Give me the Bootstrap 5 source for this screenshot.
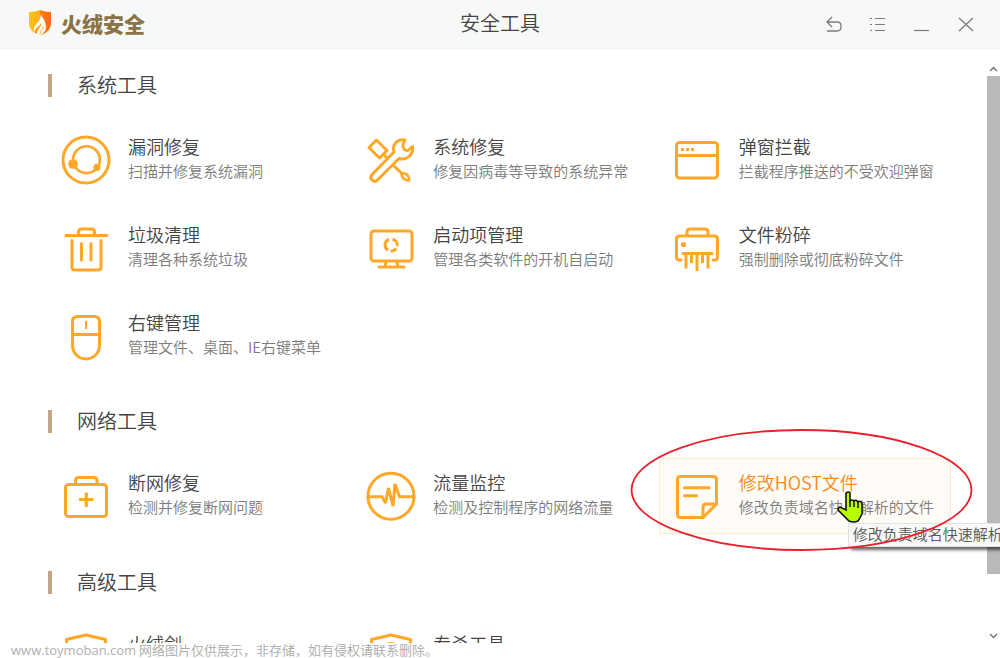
<!DOCTYPE html>
<html lang="zh-CN">
<head>
<meta charset="utf-8">
<meta name="viewport" content="width=device-width, initial-scale=1">
<title>安全工具</title>
<link href="https://cdn.jsdelivr.net/npm/bootstrap@5.3.0/dist/css/bootstrap.min.css" rel="stylesheet">
<style>
  body { font-family: "Noto Sans CJK SC", sans-serif; font-weight: 350; color: #444; background: #fff; }
  .titlebar { display: grid; grid-template-columns: 1fr auto 1fr; height: 49px; padding: 0 12px 2px; background: #f7f9f8; border-bottom: 1px solid #eff1f0; }
  .brand-name { font-size: 21px; line-height: 24px; font-weight: 900; color: #8a7345; }
  .page-title, .group-title { font-size: 20px; line-height: 24px; font-weight: 350; }
  .win-btn { width: 44px; height: 46px; color: #7b7b7b; border-radius: 0; }
  .tool-pane { padding: 25px 36px 0 48px; }
  .group-title { height: 23px; margin-bottom: 25px; padding-left: 25px; border-left: 4px solid #c3a587; line-height: 21px; }
  .tool-group { margin-bottom: 36px; }
  .tool-group + .tool-group { margin-bottom: 37px; }
  .tool-grid { --bs-gutter-x: 13px; --bs-gutter-y: 12px; }
  .tool { height: 76px; padding: 0 11px; gap: 16px; border: 1px solid transparent; color: #444; white-space: nowrap; }
  .tool.active { background: #fffbf6; border-color: #ffe9c8; }
  .tool.active .tool-name { color: #f78a23; }
  .tool-icon { width: 52px; height: 52px; flex: none; fill: none; stroke: #ffa726; stroke-width: 3; stroke-linecap: round; stroke-linejoin: round; }
  .tool-icon .dot { fill: #ffa726; stroke: none; }
  .tool-text { padding-bottom: 4px; }
  .tool-name { font-size: 18px; line-height: 26px; }
  .tool-desc { font-size: 15px; line-height: 24px; color: #7c7c7c; }
  .ring { left: -29px; top: -29px; z-index: 5; pointer-events: none; }
  .pointer { left: 178px; top: 32px; z-index: 4; }
  .hint { left: 189px; top: 65px; z-index: 3; height: 24px; padding: 0 4px; font-size: 15px; line-height: 20px; color: #575757; background: #f9f9f9; border: 1px solid #e2e2e2; box-shadow: 3px 3px 3px rgba(0,0,0,.6); white-space: nowrap; }
  .scroller { width: 13px; padding-top: 13px; }
  .scroller button { height: 14px; color: #777; }
  .thumb { flex: 9 0 0; background: #b9b9b9; }
  .track { flex: 1 0 0; }
  .notice { height: 15px; padding-left: 11px; font-size: 13px; line-height: 13px; color: #a9a9a9; }
  .notice a { font-family: "Open Sans", sans-serif; font-weight: 400; color: #b0b0b0; }
</style>
</head>
<body class="vh-100 d-flex flex-column overflow-hidden">
<header class="titlebar align-items-center">
  <div class="d-flex align-items-center gap-2 ps-3">
    <svg width="25" height="28" viewBox="0 0 25 28" aria-hidden="true">
      <defs><linearGradient id="flame" x1="0" x2="1"><stop offset="0" stop-color="#ffc21e"/><stop offset=".5" stop-color="#ffae19"/><stop offset=".5" stop-color="#ff8416"/><stop offset="1" stop-color="#fb6810"/></linearGradient></defs>
      <path d="M1 3Q7 3 12 1Q17 3 23 3V14C23 21 18 24 12 27C6 24 1 21 1 14Z" fill="url(#flame)"/>
      <path d="M13 5C14 9 18 12 18 18C18 22 15 25 12 27C11 27 7 25 6 23C5 18 8 16 10 13C12 10 13 8 13 5Z" fill="#fff"/>
      <path d="M13 14C14 18 9 19 9 25L7 24C5 19 12 18 13 14Z" fill="#ff9a18"/>
      <path d="M15 17C16 20 12 21 12 26" fill="none" stroke="#ffb04a" stroke-width="1"/>
    </svg>
    <span class="brand-name">火绒安全</span>
  </div>
  <h1 class="page-title m-0">安全工具</h1>
  <div class="d-flex justify-content-end">
    <button class="win-btn btn p-0 border-0" type="button" aria-label="返回"><svg width="20" height="20" viewBox="0 0 20 20" fill="none" stroke="currentColor" stroke-width="1.3"><path d="M8 2L3 7L8 12M3 7H13Q17 7 17 11V12Q17 16 13 16H3"/></svg></button>
    <button class="win-btn btn p-0 border-0" type="button" aria-label="菜单"><svg width="20" height="20" viewBox="0 0 20 20" fill="none" stroke="currentColor" stroke-width="1.2"><path d="M2 3.5H4M7 3.5H17M2 9.5H4M7 9.5H17M2 15.5H4M7 15.5H17"/></svg></button>
    <button class="win-btn btn p-0 border-0" type="button" aria-label="最小化"><svg width="20" height="20" viewBox="0 0 20 20" fill="none" stroke="currentColor" stroke-width="1.2"><path d="M2 15.5H17"/></svg></button>
    <button class="win-btn btn p-0 border-0" type="button" aria-label="关闭"><svg width="20" height="20" viewBox="0 0 20 20" fill="none" stroke="currentColor" stroke-width="1.3"><path d="M3 3L17 16M17 3L3 16"/></svg></button>
  </div>
</header>

<main class="d-flex flex-grow-1 overflow-hidden">
  <div class="tool-pane flex-grow-1">
    <section class="tool-group">
      <h2 class="group-title">系统工具</h2>
      <div class="row tool-grid">
        <div class="col-4"><a class="tool d-flex align-items-center text-decoration-none" href="#">
          <svg class="tool-icon" viewBox="0 0 52 52"><circle cx="26" cy="26" r="23"/><circle cx="26.5" cy="25.7" r="13.4" stroke-width="2.6"/><circle class="dot" cx="13" cy="30" r="4.8"/><circle class="dot" cx="37" cy="33.3" r="3.6"/></svg>
          <span class="tool-text"><span class="tool-name d-block">漏洞修复</span><span class="tool-desc d-block">扫描并修复系统漏洞</span></span></a></div>
        <div class="col-4"><a class="tool d-flex align-items-center text-decoration-none" href="#">
          <svg class="tool-icon" viewBox="0 0 52 52"><path d="M4 13.5L11.5 6L22 16.5L14.5 24ZM18.5 20.5L21.5 23.5M29 32L37 39.5"/><path d="M36.5 39.5Q41 38.500 43 42Q44.500 45 44 46.500Q41 46.500 38.500 44.500Q36.500 42.500 36.500 39.500Z" stroke-width="2.6"/><path d="M40 6C33 4.500 26.500 10 29 18L7 40.500C3.500 44.500 8.500 49.500 12.500 46L34 24.500C42 27 49 20 47.500 12.500L43 16.500Q38 17 38 11.500Q38 9.500 40 6Z"/></svg>
          <span class="tool-text"><span class="tool-name d-block">系统修复</span><span class="tool-desc d-block">修复因病毒等导致的系统异常</span></span></a></div>
        <div class="col-4"><a class="tool d-flex align-items-center text-decoration-none" href="#">
          <svg class="tool-icon" viewBox="0 0 52 52"><rect x="5.500" y="8.500" width="41" height="35.500" rx="3"/><path d="M6 21.500H46"/><path class="dot" d="M10 14h3v3h-3zM15 14h3v3h-3zM20 14h3v3h-3z"/></svg>
          <span class="tool-text"><span class="tool-name d-block">弹窗拦截</span><span class="tool-desc d-block">拦截程序推送的不受欢迎弹窗</span></span></a></div>
        <div class="col-4"><a class="tool d-flex align-items-center text-decoration-none" href="#">
          <svg class="tool-icon" viewBox="0 0 52 52"><path d="M6 13.500H47M18.500 13V10Q18.500 7 21.500 7H31.500Q34.500 7 34.500 10V13M12 18.500V45Q12 48 15 48H38Q41 48 41 45V18.500M21.500 21.500V38M31 21.500V38"/></svg>
          <span class="tool-text"><span class="tool-name d-block">垃圾清理</span><span class="tool-desc d-block">清理各种系统垃圾</span></span></a></div>
        <div class="col-4"><a class="tool d-flex align-items-center text-decoration-none" href="#">
          <svg class="tool-icon" viewBox="0 0 52 52"><rect x="6" y="9" width="41" height="30" rx="3"/><path d="M14 45H39M21 40L20 45M32 40L33 45"/><path d="M23 28.200A6 6 0 0 1 23.500 17.600M27.500 17.200A6 6 0 0 1 32.200 24M30.500 27A6 6 0 0 1 25.500 29M21 19L24 17.300M31.500 27L28.500 28.700" stroke-linecap="butt"/></svg>
          <span class="tool-text"><span class="tool-name d-block">启动项管理</span><span class="tool-desc d-block">管理各类软件的开机自启动</span></span></a></div>
        <div class="col-4"><a class="tool d-flex align-items-center text-decoration-none" href="#">
          <svg class="tool-icon" viewBox="0 0 52 52"><path d="M16 13.500V10Q16 7 19 7H34Q37 7 37 10V13.500M10 38H8.500Q5.500 38 5.500 35V17Q5.500 14 8.500 14H43.500Q46.500 14 46.500 17V35Q46.500 38 43.500 38H42M12 31.500H41"/><path d="M15 32V46.500M20.500 32V41M26 32V49M31.500 32V41M37 32V46.500" stroke-linecap="butt"/><circle class="dot" cx="12.500" cy="22.500" r="2.600"/></svg>
          <span class="tool-text"><span class="tool-name d-block">文件粉碎</span><span class="tool-desc d-block">强制删除或彻底粉碎文件</span></span></a></div>
        <div class="col-4"><a class="tool d-flex align-items-center text-decoration-none" href="#">
          <svg class="tool-icon" viewBox="0 0 52 52"><path d="M17.500 6.500H34.500Q39.500 6.500 39.500 11.500V35.500A13.500 13.500 0 0 1 12.500 35.500V11.500Q12.500 6.500 17.500 6.500ZM13 24.500H39"/><path d="M26 11V19" stroke-width="2" stroke-linecap="butt"/></svg>
          <span class="tool-text"><span class="tool-name d-block">右键管理</span><span class="tool-desc d-block">管理文件、桌面、IE右键菜单</span></span></a></div>
      </div>
    </section>

    <section class="tool-group">
      <h2 class="group-title">网络工具</h2>
      <div class="row tool-grid">
        <div class="col-4"><a class="tool d-flex align-items-center text-decoration-none" href="#">
          <svg class="tool-icon" viewBox="0 0 52 52"><rect x="5.500" y="14.500" width="41" height="32" rx="3"/><path d="M15.500 14V10.500Q15.500 7.500 18.500 7.500H34Q37 7.500 37 10.500V14"/><path d="M19 29.500H33.500M26.300 22.500V37" stroke-linecap="butt"/></svg>
          <span class="tool-text"><span class="tool-name d-block">断网修复</span><span class="tool-desc d-block">检测并修复断网问题</span></span></a></div>
        <div class="col-4"><a class="tool d-flex align-items-center text-decoration-none" href="#">
          <svg class="tool-icon" viewBox="0 0 52 52"><circle cx="26" cy="26.300" r="23"/><path d="M3 26.700H17L20.500 33L23.500 18L28 36L30 14L34.500 26.700H49" stroke-linejoin="miter" stroke-miterlimit="2"/></svg>
          <span class="tool-text"><span class="tool-name d-block">流量监控</span><span class="tool-desc d-block">检测及控制程序的网络流量</span></span></a></div>
        <div class="col-4"><div class="position-relative">
          <a class="tool active d-flex align-items-center text-decoration-none" href="#" aria-describedby="host-hint">
          <svg class="tool-icon" viewBox="0 0 52 52"><path d="M31 47.500H9.500Q6.500 47.500 6.500 44.500V9.500Q6.500 6.500 9.500 6.500H42.500Q45.500 6.500 45.500 9.500V34L32 47.500V37Q32 34 35 34H45M13.500 17.700H38M13.500 25.700H25.500"/></svg>
          <span class="tool-text"><span class="tool-name d-block">修改HOST文件</span><span class="tool-desc d-block">修改负责域名快速解析的文件</span></span></a>
          <div class="hint position-absolute" id="host-hint" role="tooltip">修改负责域名快速解析的文件</div>
          <svg class="pointer position-absolute" width="28" height="34" viewBox="0 0 28 34" aria-hidden="true"><path d="M9 3Q11.500 1 13 3V11Q15 9 17 11Q19 9 21 12Q23 10 25 13V24Q23 28 21 31Q17 33 12 31L2 21Q0 18 3 17L9 20Z" fill="#b9ff00" stroke="#111" stroke-width="1.600"/><path d="M13 10V17M17 11V17M21 12V18" stroke="#111" stroke-width="1.500"/></svg>
          <svg class="ring position-absolute" width="344" height="124" viewBox="0 0 344 124" fill="none" stroke="#e8202a" stroke-width="1.800" aria-hidden="true"><ellipse cx="171.500" cy="61" rx="170" ry="60"/></svg>
        </div></div>
      </div>
    </section>

    <section class="tool-group">
      <h2 class="group-title">高级工具</h2>
      <div class="row tool-grid">
        <div class="col-4"><a class="tool d-flex align-items-center text-decoration-none" href="#">
          <svg class="tool-icon" viewBox="0 0 52 52"><path d="M6.500 8.500L26 4L45.500 8.500V28Q45 40 26 48Q7 40 6.500 28Z"/></svg>
          <span class="tool-text"><span class="tool-name d-block">火绒剑</span><span class="tool-desc d-block">&nbsp;</span></span></a></div>
        <div class="col-4"><a class="tool d-flex align-items-center text-decoration-none" href="#">
          <svg class="tool-icon" viewBox="0 0 52 52"><path d="M6.500 8.500L26 4L45.500 8.500V28Q45 40 26 48Q7 40 6.500 28ZM20 18Q20 12.500 26 12.500Q32 12.500 32 18"/></svg>
          <span class="tool-text"><span class="tool-name d-block">专杀工具</span><span class="tool-desc d-block">&nbsp;</span></span></a></div>
      </div>
    </section>
  </div>

  <div class="scroller d-flex flex-column flex-shrink-0">
    <button class="btn p-0 border-0 d-flex align-items-center justify-content-center" type="button" aria-label="向上滚动"><svg width="9" height="6" viewBox="0 0 9 6" fill="none" stroke="currentColor" stroke-width="1.500"><path d="M1 5L4.500 1.500L8 5"/></svg></button>
    <div class="thumb"></div>
    <div class="track"></div>
    <button class="btn p-0 border-0 d-flex align-items-center justify-content-center" type="button" aria-label="向下滚动"><svg width="9" height="6" viewBox="0 0 9 6" fill="none" stroke="currentColor" stroke-width="1.500"><path d="M1 1L4.500 4.500L8 1"/></svg></button>
  </div>
</main>

<footer class="notice flex-shrink-0 text-nowrap"><a class="text-decoration-none" href="#">www.toymoban.com</a> 网络图片仅供展示，非存储，如有侵权请联系删除。</footer>
<script src="https://cdn.jsdelivr.net/npm/bootstrap@5.3.0/dist/js/bootstrap.bundle.min.js"></script>
</body>
</html>
